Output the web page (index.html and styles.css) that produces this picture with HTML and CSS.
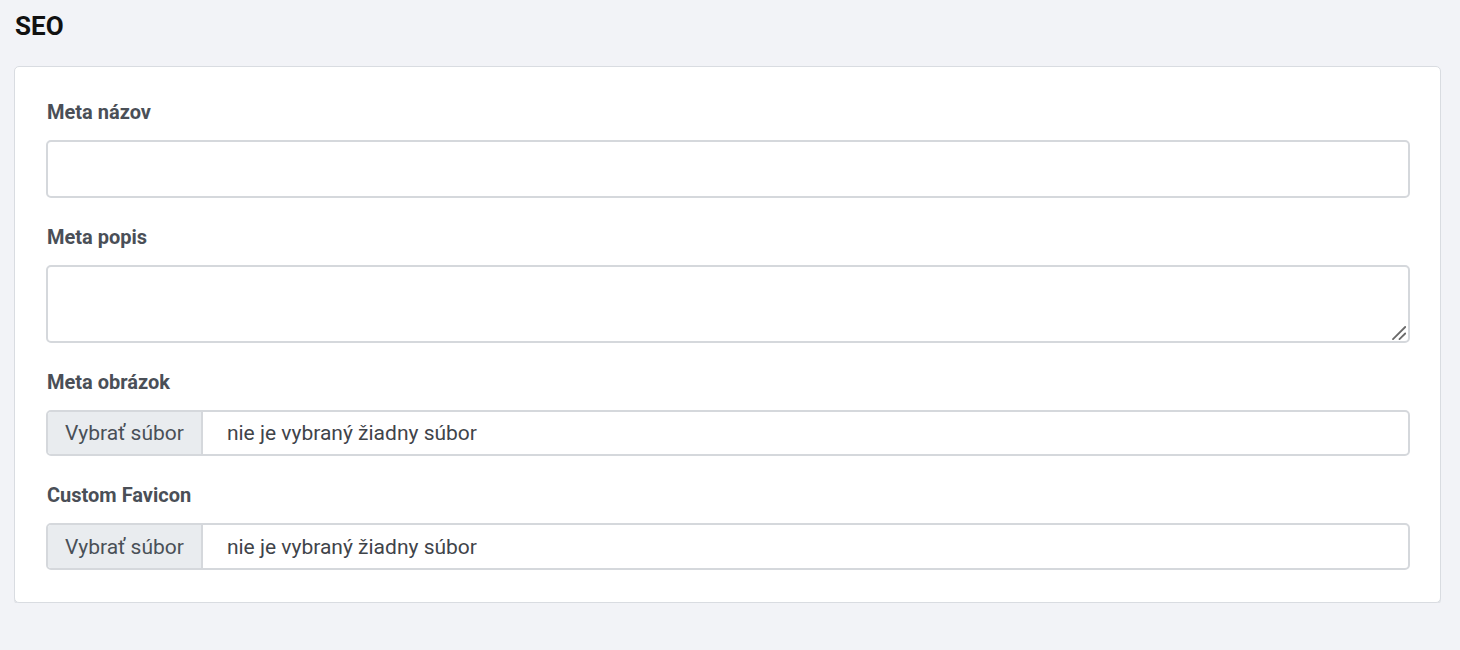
FILE: index.html
```html
<!DOCTYPE html>
<html lang="sk">
<head>
<meta charset="utf-8">
<title>SEO</title>
<link rel="stylesheet" href="styles.css">
</head>
<body>
<div class="page">
  <h2 class="section-title">SEO</h2>
  <div class="card">
    <div class="field">
      <label class="field-label" for="meta-title">Meta názov</label>
      <input class="text-input" id="meta-title" type="text">
    </div>
    <div class="field">
      <label class="field-label" for="meta-desc">Meta popis</label>
      <div class="area-wrap">
        <textarea class="text-area" id="meta-desc"></textarea>
        <svg class="grip" width="14" height="14" viewBox="0 0 14 14" aria-hidden="true">
          <line x1="1" y1="13.2" x2="13.2" y2="1" stroke="#6a6a6a" stroke-width="1.8" stroke-linecap="round"/>
          <line x1="7.5" y1="13.2" x2="13.2" y2="7.5" stroke="#6a6a6a" stroke-width="1.8" stroke-linecap="round"/>
        </svg>
      </div>
    </div>
    <div class="field">
      <span class="field-label">Meta obrázok</span>
      <div class="file-input">
        <span class="file-button">Vybrať súbor</span>
        <span class="file-name">nie je vybraný žiadny súbor</span>
      </div>
    </div>
    <div class="field">
      <span class="field-label">Custom Favicon</span>
      <div class="file-input">
        <span class="file-button">Vybrať súbor</span>
        <span class="file-name">nie je vybraný žiadny súbor</span>
      </div>
    </div>
  </div>
</div>
</body>
</html>
```

FILE: styles.css
```css
* { box-sizing: border-box; }
html, body {
  margin: 0;
  padding: 0;
  background: #f2f3f7;
  font-family: Roboto, "Liberation Sans", Arial, sans-serif;
}
.page {
  padding: 11px 19px 0 14px;
}
.section-title {
  margin: 0 0 0 1px;
  font-size: 26px;
  line-height: 30px;
  font-weight: 700;
  color: #111;
}
.card {
  margin-top: 25px;
  background: #fff;
  border: 1px solid #d9dce1;
  border-radius: 5px;
  box-shadow: 0 2px 0 #e1e3e8;
  padding: 33px 30px 32px 31px;
}
.field {
  display: flex;
  flex-direction: column;
}
.field + .field {
  margin-top: 27px;
}
.field-label {
  display: block;
  font-size: 20px;
  line-height: 24px;
  font-weight: 700;
  color: #4a4f57;
  margin: 0 0 16px 1px;
}
.text-input,
.text-area,
.file-input {
  width: 100%;
  border: 2px solid #d5d8dc;
  border-radius: 5px;
  background: #fff;
  font-family: inherit;
  font-size: 21px;
  color: #495057;
}
.text-input {
  height: 58px;
  padding: 0 16px;
}
.area-wrap {
  position: relative;
}
.text-area {
  height: 78px;
  padding: 10px 16px;
  resize: none;
  display: block;
}
.grip {
  position: absolute;
  right: 4px;
  bottom: 3px;
  display: block;
}
.file-input {
  height: 46px;
  display: flex;
  align-items: stretch;
  overflow: hidden;
}
.file-input + .field-label { margin-top: 0; }
.field:last-child .file-input { height: 47px; }
.file-button {
  display: flex;
  align-items: center;
  padding: 0 17px 0 17px;
  background: #e9ecef;
  border-right: 2px solid #d5d8dc;
  color: #495057;
}
.file-name {
  display: flex;
  align-items: center;
  padding-left: 24px;
  color: #3f444a;
}
```
